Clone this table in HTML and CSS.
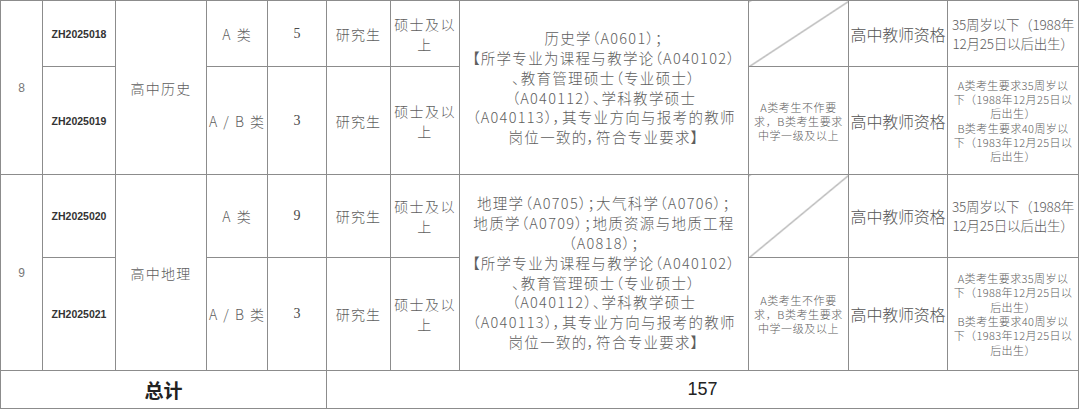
FILE: index.html
```html
<!DOCTYPE html>
<html lang="zh-CN">
<head>
<meta charset="utf-8">
<title>岗位表</title>
<link rel="stylesheet" href="styles.css">
</head>
<body>
<table class="grid">
  <colgroup>
    <col class="c-no"><col class="c-code"><col class="c-subj"><col class="c-type"><col class="c-num">
    <col class="c-edu"><col class="c-deg"><col class="c-major"><col class="c-title"><col class="c-cert"><col class="c-age">
  </colgroup>
  <tbody>
    <tr class="r1">
      <td rowspan="2" class="no">8</td>
      <td class="code">ZH2025018</td>
      <td rowspan="2" class="subj">高中历史</td>
      <td class="type">A 类</td>
      <td class="num">5</td>
      <td class="edu">研究生</td>
      <td class="deg">硕士及以<br>上</td>
      <td rowspan="2" class="major">历史学（A0601）；<br>【所学专业为课程与教学论（A040102）<br>、教育管理硕士（专业硕士）<br>（A040112）、学科教学硕士<br>（A040113），其专业方向与报考的教师<br>岗位一致的，符合专业要求】</td>
      <td class="diag"></td>
      <td class="cert">高中教师资格</td>
      <td class="age">35周岁以下（1988年<br>12月25日以后出生）</td>
    </tr>
    <tr class="r2">
      <td class="code">ZH2025019</td>
      <td class="type">A / B 类</td>
      <td class="num">3</td>
      <td class="edu">研究生</td>
      <td class="deg">硕士及以<br>上</td>
      <td class="title">A类考生不作要<br>求，B类考生要求<br>中学一级及以上</td>
      <td class="cert">高中教师资格</td>
      <td class="age small">A类考生要求35周岁以<br>下（1988年12月25日以<br>后出生）<br>B类考生要求40周岁以<br>下（1983年12月25日以<br>后出生）</td>
    </tr>
    <tr class="r3">
      <td rowspan="2" class="no">9</td>
      <td class="code">ZH2025020</td>
      <td rowspan="2" class="subj">高中地理</td>
      <td class="type">A 类</td>
      <td class="num">9</td>
      <td class="edu">研究生</td>
      <td class="deg">硕士及以<br>上</td>
      <td rowspan="2" class="major">地理学（A0705）；大气科学（A0706）；<br>地质学（A0709）；地质资源与地质工程<br>（A0818）；<br>【所学专业为课程与教学论（A040102）<br>、教育管理硕士（专业硕士）<br>（A040112）、学科教学硕士<br>（A040113），其专业方向与报考的教师<br>岗位一致的，符合专业要求】</td>
      <td class="diag"></td>
      <td class="cert">高中教师资格</td>
      <td class="age">35周岁以下（1988年<br>12月25日以后出生）</td>
    </tr>
    <tr class="r4">
      <td class="code">ZH2025021</td>
      <td class="type">A / B 类</td>
      <td class="num">3</td>
      <td class="edu">研究生</td>
      <td class="deg">硕士及以<br>上</td>
      <td class="title">A类考生不作要<br>求，B类考生要求<br>中学一级及以上</td>
      <td class="cert">高中教师资格</td>
      <td class="age small">A类考生要求35周岁以<br>下（1988年12月25日以<br>后出生）<br>B类考生要求40周岁以<br>下（1983年12月25日以<br>后出生）</td>
    </tr>
    <tr class="r5">
      <td colspan="5" class="total">总计</td>
      <td colspan="6" class="sum">157</td>
    </tr>
  </tbody>
</table>
</body>
</html>
```
FILE: styles.css
```css
html, body {
  margin: 0;
  padding: 0;
  background: #fff;
}

.grid {
  border-collapse: collapse;
  table-layout: fixed;
  width: 1079px;
  font-family: "Noto Sans CJK SC", "Noto Sans", sans-serif;
  font-weight: 300;
  color: #5e5e5e;
}

.c-no { width: 42px; }
.c-code { width: 73px; }
.c-subj { width: 91px; }
.c-type { width: 61px; }
.c-num { width: 59px; }
.c-edu { width: 64px; }
.c-deg { width: 69px; }
.c-major { width: 289px; }
.c-title { width: 100px; }
.c-cert { width: 99px; }
.c-age { width: 131px; }

.grid td {
  border: 1px solid #8c8c8c;
  padding: 0;
  text-align: center;
  vertical-align: middle;
  white-space: nowrap;
  overflow: hidden;
}

.r1 { height: 66px; }
.r2 { height: 108px; }
.r3 { height: 83px; }
.r4 { height: 113px; }
.r5 { height: 38px; }

.no {
  font-family: "Liberation Sans", sans-serif;
  font-size: 12px;
  font-weight: 400;
  color: #777;
}

.code {
  font-family: "Liberation Sans", sans-serif;
  font-size: 10.5px;
  font-weight: 700;
  color: #333;
}

.subj {
  font-size: 14px;
  letter-spacing: 1.3px;
}

.type {
  font-size: 14px;
  letter-spacing: 1px;
  word-spacing: 1px;
}

.num {
  font-family: "Liberation Serif", serif;
  font-size: 14px;
  font-weight: 400;
  color: #4a4a4a;
}

.edu {
  font-size: 14px;
  letter-spacing: 1.2px;
}

.deg {
  font-size: 14px;
  line-height: 20px;
  letter-spacing: 1.4px;
}

.major {
  font-size: 14.5px;
  line-height: 19.8px;
  letter-spacing: 1.3px;
  font-feature-settings: "palt";
}

.diag {
  background: linear-gradient(to bottom right,
    transparent calc(50% - 0.8px),
    #808080 50%,
    transparent calc(50% + 0.8px));
}

.title {
  font-size: 11px;
  line-height: 14px;
  letter-spacing: 0.6px;
}

.cert {
  font-size: 16px;
  letter-spacing: -0.2px;
  color: #555;
}

.age {
  font-size: 13.5px;
  line-height: 19px;
  letter-spacing: -0.2px;
}

.age.small {
  font-size: 11px;
  line-height: 14.3px;
  letter-spacing: 0.4px;
}

.total {
  font-size: 19px;
  font-weight: 700;
  color: #222;
}

.sum {
  font-family: "Liberation Sans", sans-serif;
  font-size: 18px;
  font-weight: 400;
  color: #222;
}
```
